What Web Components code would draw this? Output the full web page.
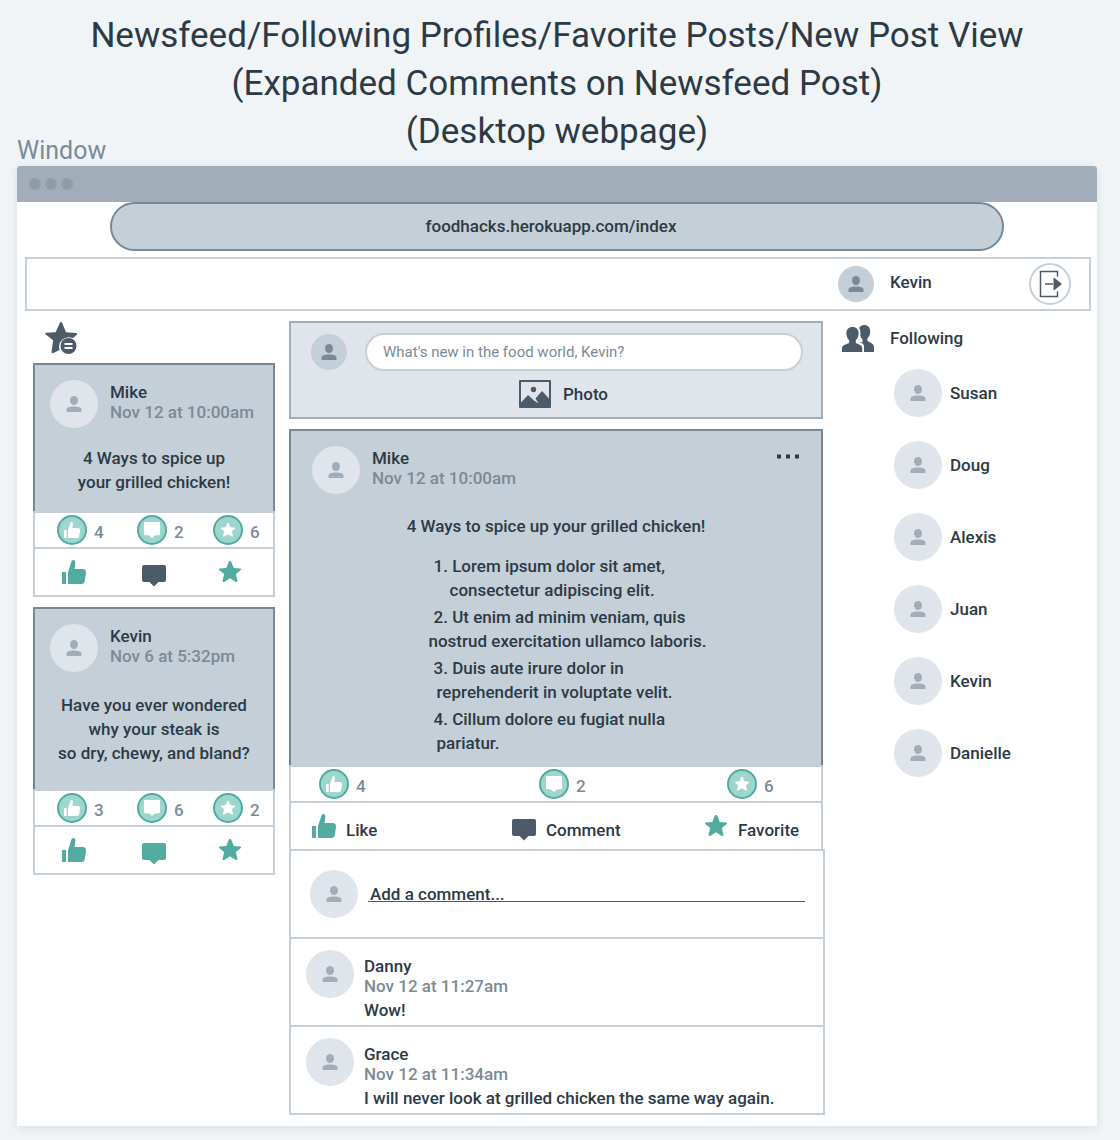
<!DOCTYPE html>
<html lang="en">
<head>
<meta charset="utf-8">
<meta name="viewport" content="width=device-width, initial-scale=1">
<title>Foodhacks newsfeed</title>
<style>
:root{
  --page:#f0f4f7; --bar:#a1adb8; --dot:#909ca8; --fill:#c5cfd8; --edge:#778896;
  --pale:#e0e5ec; --ink:#2c3a46; --muted:#7b8a97; --slate:#4d5b69;
  --teal:#51ab9f; --mint:#9dd6cf;
}
body{margin:0;background:var(--page);color:var(--ink);font:500 17px/24px Roboto,"Liberation Sans",sans-serif}
</style>
</head>
<body>
<news-board></news-board>
<script>
const base = `*{box-sizing:border-box}
button,input{font:inherit;color:inherit;margin:0;padding:0;border:0;background:none}
button{cursor:pointer}p,h1,h2,ul,ol{margin:0;padding:0;font:inherit;list-style:none}`;

const define = (name, render) => customElements.define(name, class extends HTMLElement {
  connectedCallback() {
    if (this.shadowRoot) return;
    this.attachShadow({mode: 'open'}).innerHTML = render(this);
  }
});

const thumb = '<rect y="12" width="4" height="12"/><path d="M6 24V12.2L9.2 2.600C9.500.7 10.100 0 11.300 0c1.600 0 2.200 1.200 2.100 2.900l-.8 6.200h7.900c2.700 0 3.700 1.500 3.500 4.100l-1.200 7.500c-.4 2.200-1.300 3.300-3.200 3.300z"/>';
const star = 'M12 1q1 0 1.400 1l2.300 6 6.600.5q1.600.3.500 1.400l-5 4.100 1.600 6.600q.2 2.100-1.600 1.300L12 18.300l-5.800 3.600q-1.800.8-1.600-1.300l1.600-6.600-5-4.100q-1.100-1.100.5-1.400l6.600-.5 2.300-6q.4-1 1.400-1z';
const icons = {
  like: ['0 0 24 24', thumb],
  comment: ['0 0 24 24', '<path d="M2 5h20q2 0 2 2v13q0 2-2 2h-5.500l-4.500 4.500L7.500 22H2q-2 0-2-2V7q0-2 2-2z"/>'],
  bubble: ['0 0 24 24', '<path d="M1.500 0h21Q24 0 24 1.500v17q0 1.500-1.500 1.500H17l-5 4-5-4H1.500Q0 20 0 18.500v-17Q0 0 1.500 0z"/>'],
  favorite: ['0 0 24 24', `<path d="${star}"/>`],
  person: ['0 0 16 16', '<ellipse cx="8" cy="4.500" rx="4" ry="4.500"/><path d="M.5 16v-2C.5 11.500 3.500 10.600 8 10.600s7.500.9 7.500 3.400v2z"/>'],
  favorites: ['0 0 33 33', '<path d="M16 0q.8 0 1.300 1.300l3.700 9 9.900.7q2.200.4.4 2.200l-3.500 3A9.700 9.700 0 0 0 14.500 28l-6.600 3.200q-1.700.5-1.300-1.300l1.500-11.600-7.600-6q-1.200-1.200.7-1.500l9.400-.6 4.100-9Q15.200 0 16 0z"/><circle cx="23.500" cy="24" r="8"/><path fill="#fff" d="M19.500 21h8v2h-8zm0 4h8v2h-8z"/>'],
  photo: ['0 0 32 28', '<path d="M1 0h30q1 0 1 1v26q0 1-1 1H1q-1 0-1-1V1Q0 0 1 0zm1 2v20.500l7-7.500 6 5.500 4.500 3-3-5L23 11l7 7.500V2z" fill-rule="evenodd"/><circle cx="14.500" cy="9.500" r="2.700"/>'],
  people: ['0 0 32 27', '<path d="M17 3C18.200 1 20 0 22 0c4 0 6.200 2.500 6.200 6.200 0 3.300-1 5.500-2.800 7.200v2.200c0 1.500 6.600 2.200 6.600 6.400v5H22v-6c0-1.700-1.800-2.700-4.500-3.700 2 .2 3 0 3-.8v-2.100c-1.200-1.200-1.900-2.600-2.200-4.200C18.800 7.300 18.400 4.500 17 3z"/><path d="M10.500 2C14.500 2 16.600 4.600 16.600 8c0 3.400-1 5.600-2.800 7.300v2.200c0 1.300 6.400 1.900 6.400 5.500v4H0v-4c0-3.600 7.200-4.200 7.200-5.500v-2.200C5.400 13.600 4.400 11.400 4.400 8c0-3.400 2.100-6 6.100-6z"/>'],
  logout: ['0 0 24 28', '<path fill="none" stroke="currentColor" stroke-width="1.500" d="M19.500 6.500V1.500H2.500v25h17v-5M7 14h8"/><path d="M15.500 8.500q0-1 1-.5L24 14l-7.500 6q-1 .5-1-.5z"/>'],
  more: ['0 0 24 5', '<path d="M1 .5h4v4H1zm9 0h4v4h-4zm9 0h4v4h-4z"/>']
};
define('ui-icon', el => {
  const [box, art] = icons[el.getAttribute('name')];
  return `<style>:host{display:block;flex:none;width:24px;height:24px}svg{display:block;width:100%;height:100%;overflow:visible;fill:currentColor}</style>
  <svg viewBox="${box}" aria-hidden="true">${art}</svg>`;
});

define('user-avatar', () => `<style>
:host{display:grid;place-items:center;flex:none;width:48px;height:48px;border-radius:50%;background:var(--pale);color:var(--bar)}
:host([small]){width:36px;height:36px;background:var(--fill);color:#7a8997}
ui-icon{width:16px;height:16px}</style><ui-icon name="person"></ui-icon>`);

define('user-line', el => `<style>${base}
:host{display:flex;gap:12px;flex:1}
:host([reply]){gap:10px}
div{padding-top:2px}
:host([reply]) div{padding-top:6px}
p{line-height:20px}.when{color:var(--muted)}
slot{display:block;margin-top:2px}</style>
<user-avatar></user-avatar>
<div><p>${el.getAttribute('name')}</p><p class="when">${el.getAttribute('when')}</p><slot></slot></div>`);

define('reaction-count', el => `<style>${base}
:host{display:flex;align-items:center;gap:7px;color:var(--muted)}
.disc{display:grid;place-items:center;width:30px;height:30px;border:2px solid var(--teal);border-radius:50%;background:var(--mint);color:#fff}
ui-icon{width:16px;height:16px}
p{padding-top:3px}</style>
<span class="disc"><ui-icon name="${el.getAttribute('icon')}"></ui-icon></span><p><slot></slot></p>`);

define('post-action', el => `<style>${base}
:host{display:block;color:var(--ink)}
button{display:flex;align-items:center;gap:10px;text-align:left}
ui-icon{color:var(--teal)}:host([idle]) ui-icon{color:var(--slate)}
span{padding-top:7px}span:empty{display:none}</style>
<button type="button" aria-label="${el.getAttribute('label')}"><ui-icon name="${el.getAttribute('icon')}"></ui-icon><span>${el.hasAttribute('named') ? el.getAttribute('label') : ''}</span></button>`);

define('post-card', el => {
  const wide = el.hasAttribute('wide'), [a, b, c] = el.getAttribute('counts').split(',');
  const n = wide ? 'named' : '';
  return `<style>${base}
:host{display:block;--stats:80fr 76fr 60fr;--stats-pad:22px;--acts:80fr 76fr 55fr;--acts-pad:27px;--side:15px}
:host([wide]){--stats:220fr 188fr 94fr;--stats-pad:28px;--acts:200fr 192fr 117fr;--acts-pad:21px;--side:21px}
.body{background:var(--fill);border:2px solid var(--edge);border-bottom:0;padding-top:15px}
header{display:flex;align-items:flex-start;padding:0 var(--side)}
header button{padding:8px 0;color:var(--ink)}
header button ui-icon{width:24px;height:5px}
.copy{text-align:center;padding:18px 0 17px}
:host([roomy]) .copy{padding:21px 0 24px}
:host([wide]) .copy{padding:20px 0 10px}
.stats,.acts{display:grid;align-items:center;background:#fff;border:2px solid var(--fill)}
.stats{grid-template-columns:var(--stats);padding-left:var(--stats-pad);height:36px;border-bottom:0}
.acts{grid-template-columns:var(--acts);padding-left:var(--acts-pad);height:50px}
:host([wide]) .acts{height:48px;border-bottom:0}
</style>
<article>
<div class="body"><header><user-line name="${el.getAttribute('name')}" when="${el.getAttribute('when')}"></user-line>
${wide ? '<button type="button" aria-label="Post options"><ui-icon name="more"></ui-icon></button>' : ''}</header>
<div class="copy"><slot></slot></div></div>
<div class="stats"><reaction-count icon="like">${a}</reaction-count><reaction-count icon="bubble">${b}</reaction-count><reaction-count icon="favorite">${c}</reaction-count></div>
<div class="acts"><post-action icon="like" label="Like" ${n}></post-action><post-action icon="comment" label="Comment" ${n} ${el.hasAttribute('commented') ? '' : 'idle'}></post-action><post-action icon="favorite" label="Favorite" ${n}></post-action></div>
</article>`;
});

define('recipe-steps', () => `<style>${base}
:host{display:block}
ol{display:grid;gap:3px;width:fit-content;margin:16px auto 0;padding-left:23px;text-align:left}
span{display:block;padding-left:5px}
span+span{padding-left:8px}
.deep span+span{padding-left:21px}
.flush span+span{padding-left:0}</style>
<p>4 Ways to spice up your grilled chicken!</p>
<ol>
<li class="deep"><span>1. Lorem ipsum dolor sit amet,</span><span>consectetur adipiscing elit.</span></li>
<li class="flush"><span>2. Ut enim ad minim veniam, quis</span><span>nostrud exercitation ullamco laboris.</span></li>
<li><span>3. Duis aute irure dolor in</span><span>reprehenderit in voluptate velit.</span></li>
<li><span>4. Cillum dolore eu fugiat nulla</span><span>pariatur.</span></li>
</ol>`);

define('post-composer', () => `<style>${base}
:host{display:block;background:var(--pale);border:2px solid var(--bar);padding:10px 18px 9px 20px}
.row{display:flex;align-items:center;gap:18px}
input{flex:1;min-width:0;height:38px;border:2px solid var(--fill);border-radius:19px;background:#fff;padding:0 16px;font-size:15px;font-weight:400}
input::placeholder{color:var(--muted);opacity:1}
button{display:flex;align-items:center;gap:12px;margin:9px auto 0;padding-left:13px}
ui-icon{width:32px;height:28px;color:var(--slate)}</style>
<div class="row"><user-avatar small></user-avatar><input type="text" aria-label="New post" placeholder="What's new in the food world, Kevin?"></div>
<button type="button"><ui-icon name="photo"></ui-icon>Photo</button>`);

define('comment-thread', () => `<style>${base}
:host{display:block;margin-right:-2px;border:2px solid var(--fill);background:#fff}
.add{display:flex;align-items:center;gap:10px;height:86px;padding:0 18px 0 19px}
input{flex:1;min-width:0;height:24px;padding-left:2px;background:linear-gradient(var(--slate),var(--slate)) 0 19px/100% 1px no-repeat}
input::placeholder{color:var(--ink);opacity:1}
li{border-top:2px solid var(--fill);padding:11px 15px 3px}</style>
<div class="add"><user-avatar></user-avatar><input type="text" aria-label="Comment" placeholder="Add a comment..."></div>
<ul><li><user-line reply name="Danny" when="Nov 12 at 11:27am"><p>Wow!</p></user-line></li>
<li><user-line reply name="Grace" when="Nov 12 at 11:34am"><p>I will never look at grilled chicken the same way again.</p></user-line></li></ul>`);

define('following-list', () => `<style>${base}
:host{display:block;padding-left:5px}
h2{display:flex;align-items:center;gap:16px;height:34px}
h2 ui-icon{width:32px;height:27px;color:var(--slate)}
ul{display:grid;gap:24px;padding:14px 0 0 52px}
li{display:flex;align-items:center;gap:8px}</style>
<h2><ui-icon name="people"></ui-icon>Following</h2>
<ul>${['Susan', 'Doug', 'Alexis', 'Juan', 'Kevin', 'Danielle'].map(n => `<li><user-avatar></user-avatar>${n}</li>`).join('')}</ul>`);

define('account-bar', () => `<style>${base}
:host{display:flex;justify-content:flex-end;height:54px;border:2px solid var(--fill);padding-right:18px}
div{display:flex;align-items:center;gap:16px;width:233px}
p{padding-bottom:4px}
button{display:grid;place-items:center;width:42px;height:42px;margin-left:auto;border:2px solid var(--fill);border-radius:50%;color:var(--slate)}
ui-icon{width:24px;height:28px}</style>
<div><user-avatar small></user-avatar><p>Kevin</p><button type="button" aria-label="Log out"><ui-icon name="logout"></ui-icon></button></div>`);

define('browser-frame', () => `<style>${base}
:host{display:block;background:#fff;border-radius:3px 3px 0 0;box-shadow:0 2px 8px rgba(60,80,100,.12)}
.bar{display:flex;align-items:center;gap:4px;height:36px;padding-left:12px;background:var(--bar);border-radius:3px 3px 0 0}
.bar i{width:12px;height:12px;border-radius:50%;background:var(--dot)}
.url{padding:0 93px 6px}
input{display:block;width:100%;height:49px;padding:0 12px 2px 0;border:2px solid var(--edge);border-radius:25px;background:var(--fill);text-align:center}</style>
<div class="bar"><i></i><i></i><i></i></div>
<div class="url"><input type="text" aria-label="Address" value="foodhacks.herokuapp.com/index"></div>
<slot></slot>`);

define('news-board', () => `<style>${base}
:host{display:block;padding:12px 23px 14px 17px}
.top{display:grid;align-items:end}
.top>*{grid-area:1/1}
h1{font-size:35px;font-weight:400;line-height:48px;text-align:center;padding-bottom:10px}
.top p{font-size:25px;font-weight:400;line-height:30px;color:var(--muted)}
account-bar{margin:0 6px 0 8px}
main{display:grid;grid-template-columns:242px minmax(0,1fr) 254px;gap:14px;align-items:start;padding:10px 6px 11px 16px}
.fav>ui-icon{width:33px;height:33px;margin:1px 0 8px 12px;color:var(--slate)}
.fav{display:grid}
.fav post-card+post-card,.feed post-card{margin-top:10px}</style>
<div class="top"><h1>Newsfeed/Following Profiles/Favorite Posts/New Post View<br>(Expanded Comments on Newsfeed Post)<br>(Desktop webpage)</h1><p>Window</p></div>
<browser-frame>
<account-bar></account-bar>
<main>
<section class="fav" aria-label="Favorites"><ui-icon name="favorites"></ui-icon>
<post-card name="Mike" when="Nov 12 at 10:00am" counts="4,2,6">4 Ways to spice up<br>your grilled chicken!</post-card>
<post-card roomy commented name="Kevin" when="Nov 6 at 5:32pm" counts="3,6,2">Have you ever wondered<br>why your steak is<br>so dry, chewy, and bland?</post-card></section>
<section class="feed" aria-label="Newsfeed"><post-composer></post-composer>
<post-card wide name="Mike" when="Nov 12 at 10:00am" counts="4,2,6"><recipe-steps></recipe-steps></post-card>
<comment-thread></comment-thread></section>
<following-list></following-list>
</main>
</browser-frame>`);
</script>
</body>
</html>
